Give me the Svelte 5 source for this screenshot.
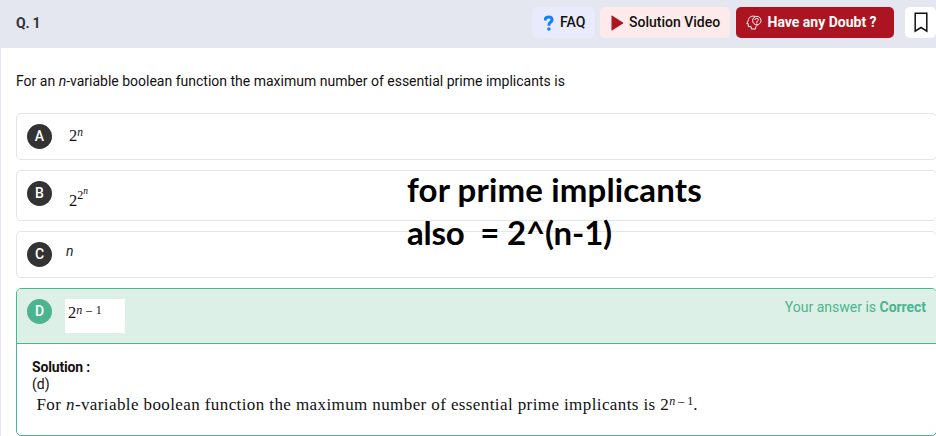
<script>
  const badges = { a: 'A', b: 'B', c: 'C', d: 'D' };
</script>

<main>
  <header>
    <h1>Q. 1</h1>
    <nav>
      <button class="faq">
        <svg width="10" height="16" viewBox="0 0 10 16"><path d="M1.3 5.4V3.5Q2.3 1.9 5 1.9T8.1 4.6Q8.1 6.4 6.4 7.3Q4.9 8.2 4.9 10.8" fill="none" stroke="#0a84ff" stroke-width="3" /><circle cx="4.9" cy="14" r="1.8" fill="#0a84ff" /></svg>
        <span>FAQ</span>
      </button>
      <button class="video">
        <svg width="13" height="16" viewBox="0 0 13 16"><path d="M.5 1.2Q.5.3 1.4.7L12 7.4Q12.6 8 12 8.6L1.4 15.2Q.5 15.7.5 14.8Z" fill="#ae1522" /></svg>
        <span>Solution Video</span>
      </button>
      <button class="doubt">
        <svg width="16" height="15" viewBox="0 0 16 15" fill="none" stroke="#fff" stroke-width=".95"><path d="M9.2 1.4C5.2.4 2.2 2.6 2.2 5.8L.8 8.6H2.2V11.6H5.2V14H9.6V11.8L12 9.6" /><circle cx="10.8" cy="5.6" r="4.2" /><path d="M9 5V4.5Q9.3 3.4 10.8 3.4T12.3 4.8Q12.3 5.7 11.4 6.1Q10.8 6.4 10.8 7.3V8.5" /></svg>
        <span>Have any Doubt ?</span>
      </button>
      <button class="mark" aria-label="Bookmark">
        <svg width="14" height="21" viewBox="0 0 14 21"><path d="M1.2 1.2H12.8V19.1L7 15.5L1.2 19.1Z" fill="none" stroke="#111" stroke-width="1.5" /></svg>
      </button>
    </nav>
  </header>

  <p class="question"><span>For an <i>n</i>-variable boolean function the maximum number of essential prime implicants is</span></p>

  <section class="options">
    <article class="card"><b class="badge">{badges.a}</b><span class="math a">2<sup><i>n</i></sup></span></article>
    <article class="card tall"><b class="badge">{badges.b}</b><span class="math b">2<sup>2<sup><i>n</i></sup></sup></span></article>
    <article class="card"><b class="badge">{badges.c}</b><i class="plain">n</i></article>
    <article class="answer">
      <div class="top">
        <b class="badge green">{badges.d}</b>
        <span class="math d">2<sup><i>n</i> – 1</sup></span>
        <span class="result">Your answer is <b>Correct</b></span>
      </div>
      <div class="solution">
        <strong>Solution :</strong>
        <span class="key">(d)</span>
        <p><span>For <i>n</i>-variable boolean function the maximum number of essential prime implicants is 2<sup><i>n</i> – 1</sup>.</span></p>
      </div>
    </article>
  </section>

  <div class="note"><span class="n1">for prime implicants</span><span class="n2">also&nbsp; = 2^(n-1)</span></div>
</main>

<style>
  :global(body) { margin: 0; overflow: hidden; background: #fff; }
  main { position: relative; box-sizing: border-box; width: 936px; height: 436px; overflow: hidden; border-left: 1px solid #e4e6f5; font: 14px/16px Roboto, sans-serif; color: #212529; background: #fff; }
  header { display: flex; justify-content: space-between; height: 48px; background: #e4e7f0; box-sizing: border-box; padding: 7px 0 0 15px; }
  h1 { font-size: 14px; line-height: 16px; font-weight: 700; margin: 8px 0 0; color: #333; letter-spacing: -.2px; }
  nav { display: flex; flex: none; }
  button { box-sizing: border-box; height: 31px; border: 0; border-radius: 5px; padding: 0; font: 500 14px/16px Roboto, sans-serif; color: #111; display: flex; align-items: center; white-space: nowrap; }
  button svg { flex: none; }
  button span { position: relative; top: -.5px; }
  .faq { width: 63px; background: #e9eafb; padding-left: 12px; gap: 6px; margin-right: 5px; }
  .video { width: 130px; background: #fdeaea; padding-left: 11px; gap: 5px; margin-right: 6px; }
  .doubt { width: 158px; background: #ab1420; color: #fff; padding-left: 10px; gap: 5.5px; margin-right: 11px; font-weight: 700; }
  .mark { width: 31px; background: #fff; padding-left: 9px; }
  .question { margin: 25px 0 0 15px; height: 16px; color: #111; white-space: nowrap; }
  .options { width: 921px; margin: 24px 0 0 15px; display: flex; flex-direction: column; gap: 10px; }
  .card { box-sizing: border-box; height: 47px; border: 1px solid #e5e5e5; border-radius: 5px; padding: 10px; display: flex; align-items: flex-start; }
  .card.tall { height: 51px; }
  .badge { flex: none; width: 25px; height: 25px; border-radius: 50%; background: #333; color: #fff; text-align: center; font: 500 14px/25px Roboto, sans-serif; }
  .green { background: #4ab58e; }
  .math { font: 16.5px/20px "Liberation Serif", serif; color: #111; white-space: nowrap; }
  sup { font-size: 12px; line-height: 0; vertical-align: 5.5px; }
  .a { margin: 2px 0 0 17px; }
  .a sup { font-size: 11.5px; }
  .b { margin: 10px 0 0 17px; }
  .b sup { font-size: 12px; vertical-align: 7px; }
  .b sup sup { font-size: 9.5px; vertical-align: 5px; }
  .plain { margin: 1px 0 0 14px; }
  .answer { box-sizing: border-box; height: 148px; border: 1px solid #4ab58e; border-radius: 5px; overflow: hidden; }
  .top { box-sizing: border-box; height: 55px; background: #dcf0e8; border-bottom: 1px solid #4ab58e; padding: 10px; display: flex; align-items: flex-start; }
  .d { box-sizing: border-box; width: 60px; height: 34px; background: #fff; margin-left: 13px; padding: 4px 0 0 3px; }
  .d sup { letter-spacing: .4px; vertical-align: 4.5px; }
  .result { margin-left: auto; color: #4ab58e; }
  .result b { font-weight: 700; letter-spacing: -.05px; }
  .solution { display: flex; flex-direction: column; padding: 15px 15px 0; color: #111; }
  .solution strong { font-weight: 700; line-height: 17px; letter-spacing: -.17px; }
  .key { line-height: 17px; }
  .solution p { margin: 1.5px 0 0 4.5px; font: 17px/19px "Liberation Serif", serif; white-space: nowrap; letter-spacing: .4px; }
  .solution sup { letter-spacing: 0; }
  .note { position: absolute; left: 406px; top: 168px; display: flex; flex-direction: column; font: 700 33px/42.5px Lato, sans-serif; color: #000; white-space: nowrap; }
  .n1 { letter-spacing: .15px; }
  .n2 { letter-spacing: -.2px; }
</style>
